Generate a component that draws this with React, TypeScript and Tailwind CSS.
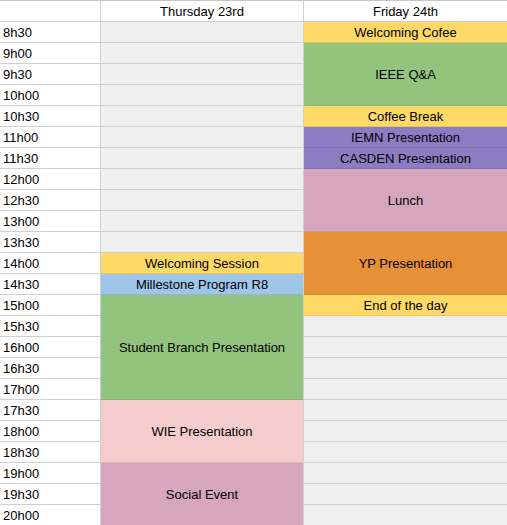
import React from "react";

type Cell = { label?: string; h: string; cls: string };

const times = [
  "8h30","9h00","9h30","10h00","10h30","11h00","11h30","12h00","12h30","13h00","13h30","14h00",
  "14h30","15h00","15h30","16h00","16h30","17h00","17h30","18h00","18h30","19h00","19h30","20h00",
];

const Y = "bg-[#ffd966] border-[#e8c55c]";
const G = "bg-[#93c47d] border-[#86b472]";
const P = "bg-[#8e7cc3] border-[#7f6eb3]";
const K = "bg-[#d5a6bd] border-[#c497ac]";
const LP = "bg-[#f4cccc] border-[#e0b8b8]";
const B = "bg-[#9fc5e8] border-[#8fb4d6]";
const O = "bg-[#e69138] border-[#d48430]";
const E = "bg-[#efefef] border-[#d0d0d0]";

const H1 = "h-[21px]";
const H3 = "h-[63px]";
const H5 = "h-[105px]";

const empty = (n: number): Cell[] => Array.from({ length: n }, () => ({ h: H1, cls: E }));

const thu: Cell[] = [
  ...empty(11),
  { label: "Welcoming Session", h: H1, cls: Y },
  { label: "Millestone Program R8", h: H1, cls: B },
  { label: "Student Branch Presentation", h: H5, cls: G },
  { label: "WIE Presentation", h: H3, cls: LP },
  { label: "Social Event", h: H3, cls: K },
];

const fri: Cell[] = [
  { label: "Welcoming Cofee", h: H1, cls: Y },
  { label: "IEEE Q&A", h: H3, cls: G },
  { label: "Coffee Break", h: H1, cls: Y },
  { label: "IEMN Presentation", h: H1, cls: P },
  { label: "CASDEN Presentation", h: H1, cls: P },
  { label: "Lunch", h: H3, cls: K },
  { label: "YP Presentation", h: H3, cls: O },
  { label: "End of the day", h: H1, cls: Y },
  ...empty(10),
];

function DayColumn({ title, cells, divider }: { title: string; cells: Cell[]; divider: boolean }) {
  return (
    <div className={`flex flex-col w-[203px] shrink-0 ${divider ? "border-r border-[#d0d0d0]" : ""}`}>
      <div className="h-[21px] shrink-0 border-b border-[#d0d0d0] bg-white flex items-center justify-center pt-px">
        {title}
      </div>
      {cells.map((c, i) => (
        <div
          key={i}
          className={`${c.h} ${c.cls} shrink-0 border-b flex items-center justify-center pt-px`}
        >
          {c.label}
        </div>
      ))}
    </div>
  );
}

export default function App() {
  return (
    <div className="w-[507px] h-[525px] overflow-hidden bg-white text-[13px] text-black font-['Liberation_Sans',Arial,sans-serif]">
      <div className="flex border-t border-[#c6c6c6]">
        <div className="flex flex-col w-[101px] shrink-0 border-r border-[#d0d0d0]">
          <div className="h-[21px] shrink-0 border-b border-[#d0d0d0] bg-white" />
          {times.map((t) => (
            <div key={t} className="h-[21px] shrink-0 border-b border-[#d0d0d0] bg-white flex items-center pl-[3px] pt-px">
              {t}
            </div>
          ))}
        </div>
        <div className="flex">
          <DayColumn title="Thursday 23rd" cells={thu} divider />
          <DayColumn title="Friday 24th" cells={fri} divider={false} />
        </div>
      </div>
    </div>
  );
}
